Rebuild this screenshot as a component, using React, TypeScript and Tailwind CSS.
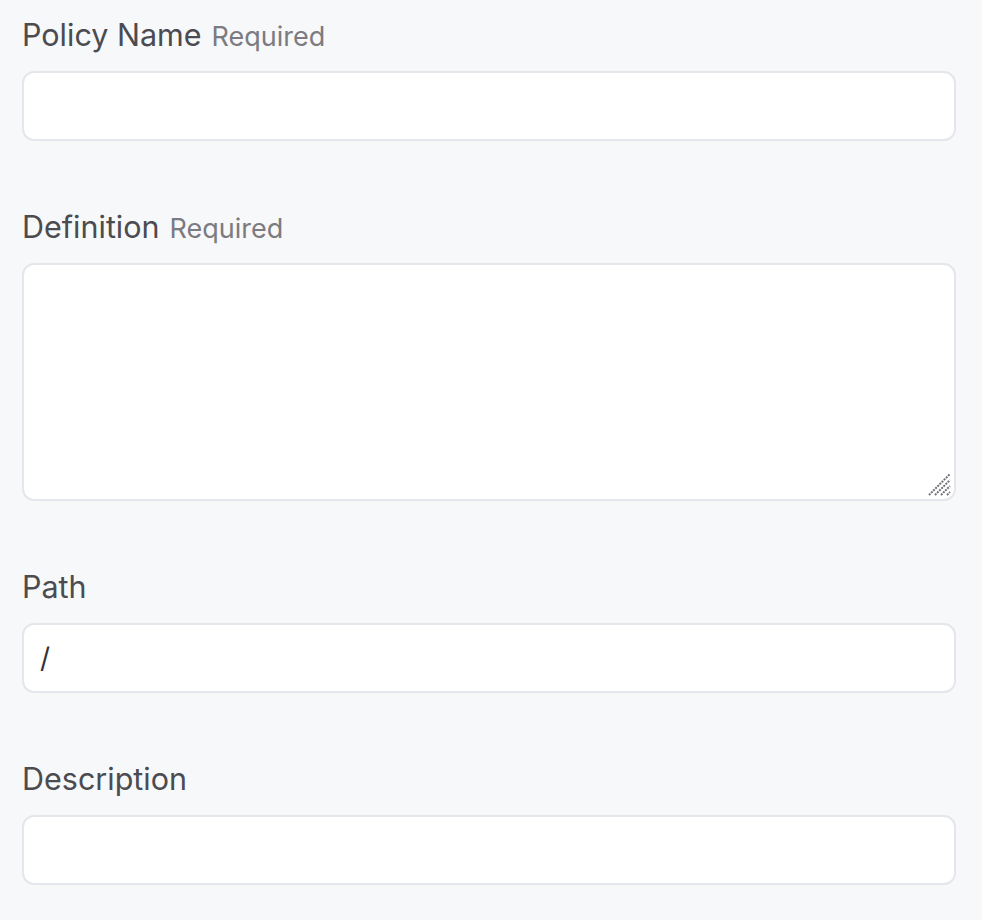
import type { ReactNode } from "react";

function Label({ text, required }: { text: string; required?: boolean }) {
    return (
        <label className="block h-[36px] leading-[36px] mb-[18px] text-[30.5px] text-[#4b4b50] whitespace-nowrap">
            {text}
            {required && <span className="ml-[10px] text-[27px] text-[#7b7b80]">Required</span>}
        </label>
    );
}

function Field({ label, required, children }: { label: string; required?: boolean; children: ReactNode }) {
    return (
        <div>
            <Label text={label} required={required} />
            {children}
        </div>
    );
}

const inputCls =
    "block w-full h-[70px] rounded-[12px] border-2 border-[#e5e6eb] bg-white px-[16px] text-[28px] text-[#333338] outline-none";

export default function App() {
    return (
        <div
            className="min-h-[920px] bg-[#f7f8fa] pl-[22px] pr-[26px] pt-[17px] flex flex-col gap-[68px]"
            style={{ fontFamily: "Inter, 'Noto Sans', sans-serif" }}
        >
            <Field label="Policy Name" required>
                <input className={inputCls} />
            </Field>

            <Field label="Definition" required>
                <div className="relative">
                    <textarea className="block w-full h-[238px] rounded-[12px] border-2 border-[#e5e6eb] bg-white resize-none outline-none" />
                    {/* resize grip */}
                    <svg className="absolute right-[5px] bottom-[5px]" width="24" height="24" viewBox="0 0 24 24">
                        <g stroke="#6f6f74" strokeWidth="2" strokeDasharray="2 1">
                            <line x1="2" y1="23" x2="23" y2="2" />
                            <line x1="8" y1="23" x2="23" y2="8" />
                            <line x1="14" y1="23" x2="23" y2="14" />
                            <line x1="20" y1="23" x2="23" y2="20" />
                        </g>
                    </svg>
                </div>
            </Field>

            <Field label="Path">
                <input className={inputCls} defaultValue="/" />
            </Field>

            <Field label="Description">
                <input className={inputCls} />
            </Field>
        </div>
    );
}
